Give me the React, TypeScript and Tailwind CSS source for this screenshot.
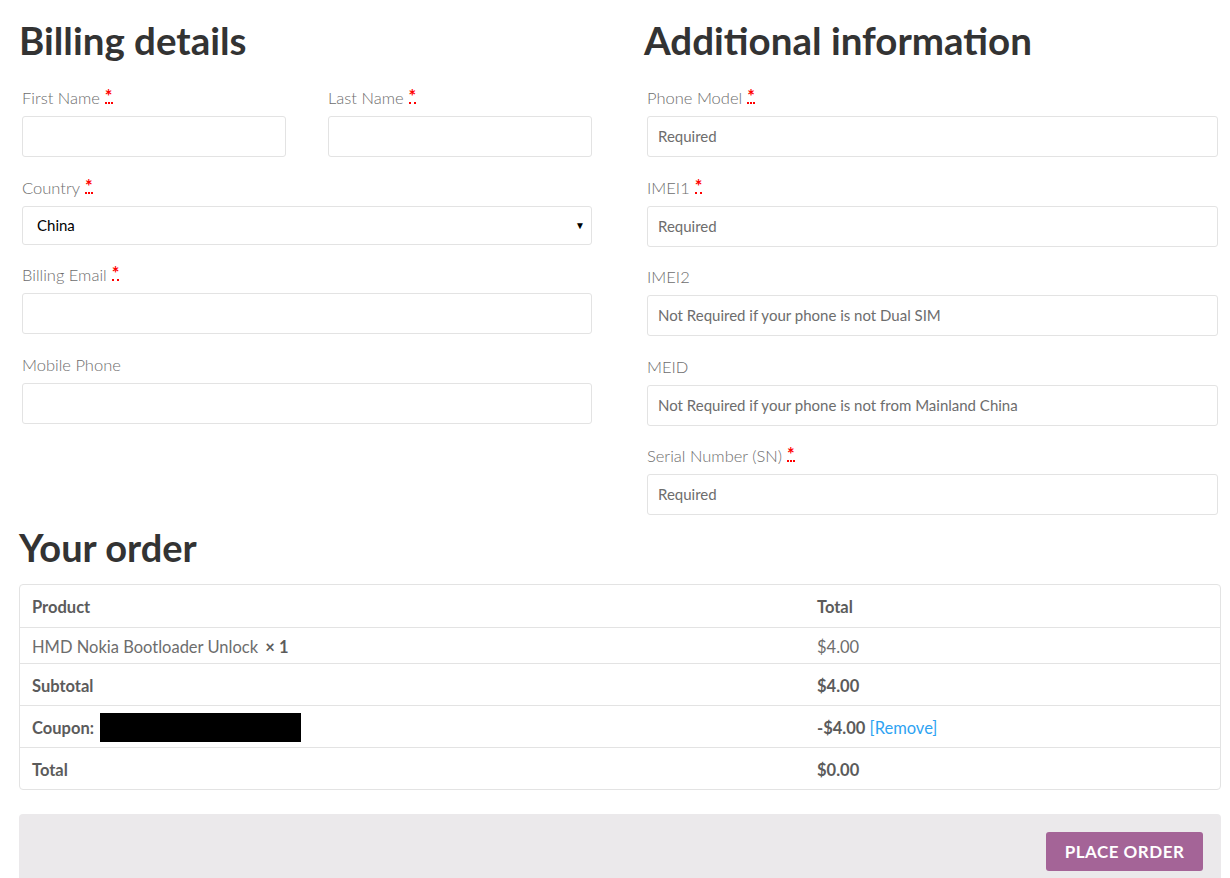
import React from 'react';

const font = { fontFamily: 'Lato, "Open Sans", sans-serif' };

const Req = () => (
    <abbr className="ml-[5px] text-[18px] font-bold text-[#ff0000] no-underline border-b-2 border-dotted border-[#ff0000] leading-[12px] inline-block align-top mt-[2px]" title="required">*</abbr>
);

type FieldProps = { label: string; required?: boolean; placeholder?: string; className?: string };

const Field: React.FC<FieldProps> = ({ label, required, placeholder, className = '' }) => (
    <div className={`pl-[2px] mb-[20.5px] ${className}`}>
        <div className="h-[20px] mb-[8px] text-[16.5px] leading-[20px] font-light text-[#6d6d6d]">
            {label}{required && <Req />}
        </div>
        <div className="h-[41px] border border-[#e3e3e3] rounded-[3px] bg-white flex items-center px-[10px] text-[15px] text-[#6d6d6d]">
            {placeholder}
        </div>
    </div>
);

export default function App() {
    return (
        <div className="bg-white min-h-[878px] pl-[19px] w-[1221px]" style={font}>
            <div className="grid grid-cols-[572px_573px] gap-x-[53px] pl-[1px]">
                {/* Billing details */}
                <div>
                    <h2 className="pt-[18px] text-[38.5px] leading-[44px] font-bold text-[#333333] -ml-[1px] mb-[26px]">Billing details</h2>
                    <div className="grid grid-cols-2 gap-x-[40px]">
                        <Field label="First Name" required />
                        <Field label="Last Name" required />
                    </div>
                    <div className="pl-[2px] mb-[20.5px]">
                        <div className="h-[20px] mb-[8px] text-[16.5px] leading-[20px] font-light text-[#6d6d6d]">
                            Country<Req />
                        </div>
                        <div className="h-[39px] border border-[#e3e3e3] rounded-[3px] bg-white flex items-center justify-between pl-[14px] pr-[6px] text-[15px] text-black">
                            <span>China</span>
                            <span className="text-[10px]">▼</span>
                        </div>
                    </div>
                    <Field label="Billing Email" required />
                    <Field label="Mobile Phone" />
                </div>

                {/* Additional information */}
                <div>
                    <h2 className="pt-[18px] text-[38.5px] leading-[44px] font-bold text-[#333333] -ml-[1px] mb-[26px]">Additional information</h2>
                    <Field label="Phone Model" required placeholder="Required" />
                    <Field label="IMEI1" required placeholder="Required" />
                    <Field label="IMEI2" placeholder="Not Required if your phone is not Dual SIM" />
                    <Field label="MEID" placeholder="Not Required if your phone is not from Mainland China" />
                    <Field label="Serial Number (SN)" required placeholder="Required" className="!mb-0" />
                </div>
            </div>

            <h2 className="mt-[10px] mb-[15px] text-[38px] leading-[44px] font-bold text-[#333333]">Your order</h2>

            <div className="border border-[#e3e3e3] rounded-[4px] text-[16.5px] text-[#6d6d6d]">
                <div className="flex h-[42px] pt-[3px] items-center font-bold text-[#5b5b5b]">
                    <div className="w-[797px] pl-[12px]">Product</div>
                    <div>Total</div>
                </div>
                <div className="flex h-[36px] pt-[3px] items-center border-t border-[#e3e3e3]">
                    <div className="w-[797px] pl-[12px]">HMD Nokia Bootloader Unlock <strong className="ml-[3px] font-bold text-[#5b5b5b]">× 1</strong></div>
                    <div>$4.00</div>
                </div>
                <div className="flex h-[42px] pt-[3px] items-center border-t border-[#e3e3e3] font-bold text-[#5b5b5b]">
                    <div className="w-[797px] pl-[12px]">Subtotal</div>
                    <div>$4.00</div>
                </div>
                <div className="flex h-[42px] pt-[3px] items-center border-t border-[#e3e3e3]">
                    <div className="w-[797px] pl-[12px] flex items-center font-bold text-[#5b5b5b]">
                        Coupon:<span className="ml-[6px] -mt-[2px] inline-block w-[201px] h-[29px] bg-black"></span>
                    </div>
                    <div>
                        <span className="font-bold text-[#5b5b5b]">-$4.00</span> <a className="text-[#2ea3f2]">[Remove]</a>
                    </div>
                </div>
                <div className="flex h-[42px] pt-[3px] items-center border-t border-[#e3e3e3] font-bold text-[#5b5b5b]">
                    <div className="w-[797px] pl-[12px]">Total</div>
                    <div>$0.00</div>
                </div>
            </div>

            <div className="mt-[24px] bg-[#ebe9eb] rounded-t-[4px] h-[70px] flex justify-end pt-[18px] pr-[18px]">
                <button className="h-[39px] w-[157px] bg-[#a46497] rounded-[3px] text-white font-bold text-[17px] tracking-[0.5px] uppercase">
                    Place Order
                </button>
            </div>
        </div>
    );
}
